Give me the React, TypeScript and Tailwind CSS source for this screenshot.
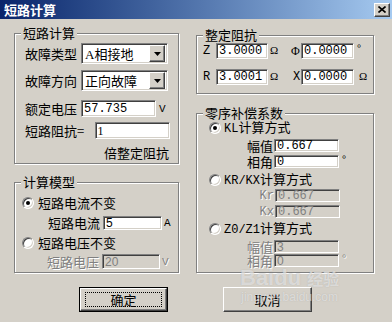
import React from "react";

const sunken =
  "border border-t-[#808080] border-l-[#808080] border-b-white border-r-white shadow-[inset_1px_1px_0_#404040,inset_-1px_-1px_0_#d4d0c8]";
const raised =
  "border border-t-white border-l-white border-b-[#404040] border-r-[#404040] shadow-[inset_-1px_-1px_0_#808080,inset_1px_1px_0_#d4d0c8]";
const dim = "text-[#808080] [text-shadow:1px_1px_0_#fff]";
const mono = "font-['Liberation_Mono',monospace]";

const Group = ({ title, className, children }: { title: string; className: string; children: React.ReactNode }) => (
  <div className={`relative border border-[#808080] shadow-[inset_1px_1px_0_#fff,1px_1px_0_#fff] ${className}`}>
    <span className="absolute left-[6px] top-[-8px] bg-[#d4d0c8] px-[2px] leading-[14px]">{title}</span>
    {children}
  </div>
);

const Field = ({ value, className, disabled, font = mono }: { value: string; className: string; disabled?: boolean; font?: string }) => (
  <div
    className={`${sunken} ${disabled ? "bg-[#d4d0c8] text-[#808080]" : "bg-white text-black"} ${font} flex items-center pl-[2px] text-[12px] leading-none ${className}`}
  >
    {value}
  </div>
);

const Combo = ({ value }: { value: string }) => (
  <div className={`${sunken} bg-white flex items-center w-[87px] h-[21px] p-[2px]`}>
    <span className="flex-1 pl-[1px] leading-none">
      {value[0] === "A" ? (
        <>
          <span className="font-['Liberation_Serif',serif]">A</span>
          {value.slice(1)}
        </>
      ) : (
        value
      )}
    </span>
    <div className={`${raised} bg-[#d4d0c8] w-[16px] h-[17px] flex items-center justify-center`}>
      <svg width="7" height="4" viewBox="0 0 7 4">
        <path d="M0 0h7L3.5 4z" fill="#000" />
      </svg>
    </div>
  </div>
);

const Radio = ({ checked }: { checked?: boolean }) => (
  <div className="w-[12px] h-[12px] rounded-full border border-t-[#808080] border-l-[#808080] border-b-white border-r-white shadow-[inset_1px_1px_0_#404040,inset_-1px_-1px_0_#d4d0c8] bg-white flex items-center justify-center">
    {checked && <div className="w-[4px] h-[4px] rounded-full bg-black" />}
  </div>
);

export default function App() {
  return (
    <div className="relative w-[392px] h-[322px] overflow-hidden bg-[#d4d0c8] text-black text-[13px] leading-[14px] font-['Noto_Sans_CJK_SC',sans-serif]">
      {/* title bar */}
      <div className="h-[19px] flex items-center bg-gradient-to-r from-[#0a246a] to-[#a6caf0] pl-[4px] pr-[2px]">
        <span className="flex-1 text-white font-bold text-[13px]">短路计算</span>
        <div className={`${raised} bg-[#d4d0c8] w-[16px] h-[14px] flex items-center justify-center`}>
          <svg width="8" height="7" viewBox="0 0 8 7">
            <path d="M0.5 0.5l7 6M7.5 0.5l-7 6" stroke="#000" strokeWidth="1.6" />
          </svg>
        </div>
      </div>

      <div className="flex pl-[14px]">
        {/* left column */}
        <div className="w-[165px] flex flex-col">
          <Group title="短路计算" className="mt-[14px] h-[131px] pt-[9px] pl-[10px] pr-[8px]">
            <div className="flex items-center h-[21px]">
              <span className="w-[56px]">故障类型</span>
              <Combo value="A相接地" />
            </div>
            <div className="flex items-center h-[21px] mt-[6px]">
              <span className="w-[56px]">故障方向</span>
              <Combo value="正向故障" />
            </div>
            <div className="flex items-center h-[17px] mt-[9px]">
              <span className="w-[56px]">额定电压</span>
              <Field value="57.735" className="w-[75px] h-[17px]" />
              <span className={`${mono} text-[11px] ml-[3px]`}>V</span>
            </div>
            <div className="flex items-center h-[17px] mt-[5px]">
              <span className="w-[70px]">短路阻抗=</span>
              <Field value="1" className="w-[76px] h-[17px]" font="font-['Liberation_Serif',serif]" />
            </div>
            <div className="text-right mt-[7px] pr-[1px]">倍整定阻抗</div>
          </Group>

          <Group title="计算模型" className="mt-[18px] h-[91px] pt-[13px] pl-[7px]">
            <div className="flex items-center gap-[4px] h-[14px]">
              <Radio checked />
              <span>短路电流不变</span>
            </div>
            <div className="flex items-center h-[14px] mt-[6px] pl-[26px]">
              <span className="w-[55px]">短路电流</span>
              <Field value="5" className="w-[59px] h-[14px]" font="font-['Liberation_Sans',sans-serif]" />
              <span className={`${mono} text-[11px] ml-[2px]`}>A</span>
            </div>
            <div className="flex items-center gap-[4px] h-[14px] mt-[6px]">
              <Radio />
              <span>短路电压不变</span>
            </div>
            <div className="flex items-center h-[15px] mt-[4px] pl-[25px]">
              <span className={`w-[55px] ${dim}`}>短路电压</span>
              <Field value="20" disabled className="w-[58px] h-[15px]" font="font-['Liberation_Sans',sans-serif]" />
              <span className={`${mono} text-[11px] ml-[2px] ${dim}`}>V</span>
            </div>
          </Group>
        </div>

        {/* right column */}
        <div className="ml-[17px] w-[178px] flex flex-col">
          <Group title="整定阻抗" className="mt-[16px] h-[59px] pt-[7px] pl-[6px]">
            <div className="flex items-center h-[16px]">
              <span className={`${mono} text-[12px] w-[13px]`}>Z</span>
              <Field value="3.0000" className="w-[52px] h-[16px]" />
              <span className="w-[23px] pl-[2px] text-[11px] font-['Liberation_Serif',serif] self-start">Ω</span>
              <span className="w-[10px] text-[12px] font-['Liberation_Serif',serif]">Φ</span>
              <Field value="0.0000" className="w-[53px] h-[16px]" />
              <span className="pl-[3px] self-start text-[11px] leading-[10px]">°</span>
            </div>
            <div className="flex items-center h-[16px] mt-[10px]">
              <span className={`${mono} text-[12px] w-[13px]`}>R</span>
              <Field value="3.0001" className="w-[52px] h-[16px]" />
              <span className="w-[25px] pl-[2px] text-[11px] font-['Liberation_Serif',serif] self-start">Ω</span>
              <span className={`${mono} text-[12px] w-[8px]`}>X</span>
              <Field value="0.0000" className="w-[53px] h-[16px]" />
              <span className="pl-[5px] self-start text-[11px] font-['Liberation_Serif',serif]">Ω</span>
            </div>
          </Group>

          <Group title="零序补偿系数" className="mt-[19px] h-[160px] pt-[7px] pl-[12px]">
            <div className="flex items-center gap-[3px] h-[14px]">
              <Radio checked />
              <span>
                <span className={`${mono} text-[12px]`}>KL</span>计算方式
              </span>
            </div>
            <div className="flex items-center h-[13px] mt-[4px]">
              <span className="w-[65px] text-right pr-[1px]">幅值</span>
              <Field value="0.667" className="w-[65px] h-[13px]" />
            </div>
            <div className="flex items-center h-[13px] mt-[3px]">
              <span className="w-[65px] text-right pr-[1px]">相角</span>
              <Field value="0" className="w-[65px] h-[13px]" />
              <span className="pl-[3px] self-start text-[11px] leading-[8px]">°</span>
            </div>
            <div className="flex items-center gap-[3px] h-[14px] mt-[5px]">
              <Radio />
              <span>
                <span className={`${mono} text-[12px]`}>KR/KX</span>计算方式
              </span>
            </div>
            <div className="flex items-center h-[13px] mt-[2px]">
              <span className={`w-[66px] text-right pr-[1px] ${mono} text-[12px] ${dim}`}>Kr</span>
              <Field value="0.667" disabled className="w-[65px] h-[13px]" />
            </div>
            <div className="flex items-center h-[13px] mt-[3px]">
              <span className={`w-[66px] text-right pr-[1px] ${mono} text-[12px] ${dim}`}>Kx</span>
              <Field value="0.667" disabled className="w-[65px] h-[13px]" />
            </div>
            <div className="flex items-center gap-[3px] h-[14px] mt-[4px]">
              <Radio />
              <span>
                <span className={`${mono} text-[12px]`}>Z0/Z1</span>计算方式
              </span>
            </div>
            <div className="flex items-center h-[13px] mt-[4px]">
              <span className={`w-[65px] text-right pr-[1px] ${dim}`}>幅值</span>
              <Field value="3" disabled className="w-[65px] h-[13px]" font="font-['Liberation_Sans',sans-serif]" />
            </div>
            <div className="flex items-center h-[13px] mt-[1px]">
              <span className={`w-[65px] text-right pr-[1px] ${dim}`}>相角</span>
              <Field value="0" disabled className="w-[65px] h-[13px]" font="font-['Liberation_Sans',sans-serif]" />
              <span className={`pl-[3px] self-start text-[11px] leading-[8px] ${dim}`}>°</span>
            </div>
          </Group>
        </div>
      </div>

      {/* buttons */}
      <div className="flex mt-[14px] pl-[79px]">
        <div className="w-[89px] h-[25px] border border-black">
          <div className={`${raised} bg-[#d4d0c8] h-full flex items-center justify-center`}>
            <span className="w-[77px] h-[15px] border border-dotted border-black flex items-center justify-center leading-[13px]">
              确定
            </span>
          </div>
        </div>
        <div className={`${raised} bg-[#d4d0c8] ml-[55px] w-[89px] h-[25px] flex items-center justify-center`}>取消</div>
      </div>

      {/* watermark */}
      <div className="absolute left-[240px] top-[266px] flex flex-col items-center text-white/55 [text-shadow:0_0_1px_rgba(128,128,128,0.5)] pointer-events-none">
        <span className="font-['Liberation_Sans',sans-serif] font-bold text-[22px] leading-[24px]">
          Baidu <span className="font-['Noto_Sans_CJK_SC',sans-serif] text-[16px]">经验</span>
        </span>
        <span className="font-['Liberation_Sans',sans-serif] text-[12px] leading-[14px]">jingyan.baidu.com</span>
      </div>
    </div>
  );
}
